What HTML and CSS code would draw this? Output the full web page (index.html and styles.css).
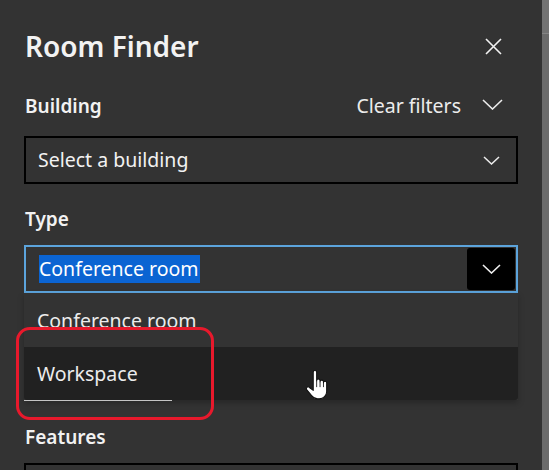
FILE: index.html
```html
<!DOCTYPE html>
<html lang="en">
<head>
<meta charset="utf-8">
<title>Room Finder</title>
<link rel="stylesheet" href="styles.css">
</head>
<body>
<div class="page">
  <div class="panel">
    <header class="head">
      <h1 class="title">Room Finder</h1>
      <span class="close">
        <svg width="17" height="17" viewBox="0 0 17 17"><path d="M1 1L16 16M16 1L1 16" stroke="#f2f2f2" stroke-width="1.6" fill="none"/></svg>
      </span>
    </header>

    <div class="field-head">
      <span class="label">Building</span>
      <span class="clear">Clear filters
        <svg class="chev-lg" width="21" height="11" viewBox="0 0 21 11"><path d="M1 1L10.5 10L20 1" stroke="#ececec" stroke-width="1.6" fill="none"/></svg>
      </span>
    </div>

    <div class="select first">
      <span class="value">Select a building</span>
      <svg class="chev" width="17" height="9" viewBox="0 0 17 9"><path d="M1 1L8.5 8L16 1" stroke="#ececec" stroke-width="1.5" fill="none"/></svg>
    </div>

    <div class="label label-gap">Type</div>

    <div class="combo">
      <div class="select focus">
        <span class="value"><span class="hl">Conference room</span></span>
        <span class="btn">
          <svg width="19" height="10" viewBox="0 0 19 10"><path d="M1 1L9.5 9L18 1" stroke="#f0f0f0" stroke-width="1.6" fill="none"/></svg>
        </span>
      </div>
      <ul class="menu">
        <li class="opt">Conference room</li>
        <li class="opt hover">Workspace</li>
      </ul>
      <div class="annot"></div>
      <svg class="cursor" width="27" height="32" viewBox="0 0 24 30">
        <path d="M8 3a1.6 1.6 0 0 1 3.2 0V11a1.6 1.6 0 0 1 3.2 0V12a1.6 1.6 0 0 1 3.2 0V13a1.5 1.5 0 0 1 3 0V21c0 4-3 7-7 7H12c-2.5 0-4-1-5.5-3L2 19.5a1.6 1.6 0 0 1 2.4-2.2L8 20Z" fill="#fff" stroke="#111" stroke-width="1" stroke-linejoin="round"/>
        <path d="M11.2 11V17M14.4 12V17M17.6 13V17" stroke="#111" stroke-width="0.8" fill="none"/>
      </svg>
    </div>

    <div class="label label-gap2">Features</div>
    <div class="select last"></div>
  </div>
  <div class="scrollbar"><div class="thumb"></div></div>
</div>
</body>
</html>
```

FILE: styles.css
```css
* { box-sizing: border-box; }
html, body {
  margin: 0;
  padding: 0;
  background: #333333;
  height: 470px;
  overflow: hidden;
}
body {
  font-family: "Noto Sans", "Open Sans", "Liberation Sans", sans-serif;
  color: #f2f2f2;
}
.page {
  display: flex;
  height: 470px;
  overflow: hidden;
}
.panel {
  width: 518px;
  padding: 26px 0 0 24px;
  flex: none;
}
.scrollbar {
  margin-left: 24px;
  width: 7px;
  height: 470px;
  background: #6b6b6b;
}
.thumb {
  height: 34px;
  background: #737373;
  border-bottom: 1px solid #858585;
}
.head {
  display: flex;
  align-items: center;
  justify-content: space-between;
  height: 40px;
}
.title {
  margin: 0 0 0 1px;
  font-size: 28px;
  font-weight: 600;
  line-height: 40px;
}
.close {
  display: flex;
  margin-right: 16px;
}
.field-head {
  display: flex;
  justify-content: space-between;
  align-items: center;
  margin-top: 28px;
  height: 24px;
}
.label {
  font-size: 19px;
  font-weight: 600;
  line-height: 24px;
  padding-left: 1px;
}
.label-gap { margin-top: 23px; }
.label-gap2 { margin-top: 25px; }
.clear {
  display: flex;
  align-items: center;
  gap: 21px;
  font-size: 19.5px;
  line-height: 24px;
  margin-right: 15px;
  color: #ececec;
}
.chev-lg { margin-top: -3px; }
.select {
  height: 48px;
  border: 2px solid #000;
  display: flex;
  align-items: center;
  justify-content: space-between;
  padding: 0 16px 0 12px;
}
.select.first { margin-top: 18px; }
.select.last { margin-top: 14px; }
.combo { position: relative; margin-top: 14px; }
.value {
  font-size: 19.5px;
  line-height: 24px;
  color: #f2f2f2;
}
.chev { margin-top: 1px; }
.focus {
  border-color: #5ca4dc;
  padding: 0 1px 0 13px;
}
.hl {
  background: #0b64d2;
  color: #fff;
  display: inline-block;
  padding: 2px 1px 2px 0;
}
.btn {
  width: 48px;
  height: 42px;
  background: #000;
  border-radius: 3px;
  display: flex;
  align-items: center;
  justify-content: center;
}
.menu {
  list-style: none;
  margin: 0;
  padding: 0;
  background: #333;
  box-shadow: 0 3px 6px rgba(0,0,0,0.25);
}
.opt {
  height: 54px;
  padding: 16px 0 0 13px;
  font-size: 19.5px;
  line-height: 24px;
  color: #ececec;
}
.opt.hover {
  height: 53px;
  background: #212121;
  position: relative;
  padding-top: 15px;
  border-radius: 0 0 3px 3px;
}
.opt.hover::after {
  content: "";
  position: absolute;
  left: 0;
  bottom: -1px;
  width: 148px;
  height: 1px;
  background: #c4c4c4;
}
.annot {
  position: absolute;
  left: -8px;
  top: 82px;
  width: 198px;
  height: 93px;
  border: 3.5px solid #e8192c;
  border-radius: 14px;
  pointer-events: none;
}
.cursor {
  position: absolute;
  left: 280px;
  top: 124px;
}
```
